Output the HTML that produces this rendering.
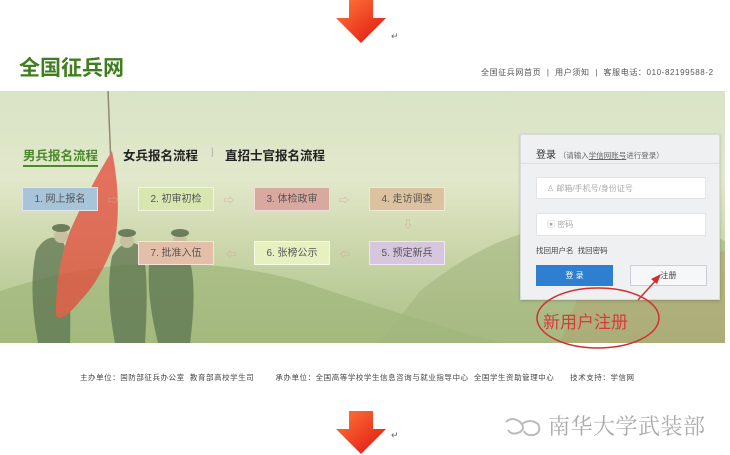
<!DOCTYPE html>
<html><head><meta charset="utf-8"><style>
*{margin:0;padding:0;box-sizing:border-box}
body{width:730px;height:455px;background:#fff;position:relative;overflow:hidden;font-family:"Liberation Sans","Noto Sans CJK SC",sans-serif}
.a{position:absolute}
.step{position:absolute;width:76px;height:24px;font-size:10px;color:#555;text-align:center;line-height:24px;border:1px solid rgba(255,255,255,.6)}
.ar{position:absolute;font-size:10px;color:#d9a0a0}
</style></head><body>
<svg class="a" style="left:336px;top:0" width="52" height="44"><defs><linearGradient id="g" x1="0" y1="0" x2="1" y2="1"><stop offset="0" stop-color="#ff7a3a"/><stop offset="1" stop-color="#e01010"/></linearGradient></defs><path d="M13 0H37V18H50L25 43L0 18H13Z" fill="url(#g)"/></svg>
<div class="a" style="left:391px;top:31px;font-size:9px;color:#666">↵</div>
<div class="a" style="left:19px;top:52px;font-size:21px;font-weight:bold;color:#3f7d1e">全国征兵网</div>
<div class="a" style="left:481px;top:67px;font-size:8px;letter-spacing:0.6px;color:#555;white-space:nowrap">全国征兵网首页 &nbsp;| &nbsp;用户须知 &nbsp;| &nbsp;客服电话：010-82199588-2</div>
<div class="a" style="left:0;top:91px;width:725px;height:252px;background:linear-gradient(180deg,#d9e3c5 0%,#e2e8cb 35%,#cdd8ad 60%,#a9bf86 100%)"></div>
<svg class="a" style="left:0;top:91px" width="725" height="252"><path d="M420 200 Q520 120 600 140 L660 120 L725 150 V252 H380Z" fill="#a3b57e" opacity=".6"/><path d="M0 200 Q150 150 300 190 Q420 230 500 252 H0Z" fill="#9fb77a" opacity=".7"/><path d="M560 252 L600 150 L660 170 L725 160 V252Z" fill="#b59a6a" opacity=".4"/>
<g opacity=".75">
<path d="M36 160 Q48 140 62 150 Q72 160 70 252 H38 Q28 200 36 160Z" fill="#5d7550"/>
<path d="M112 165 Q125 145 140 155 Q150 170 145 252 H115 Q105 200 112 165Z" fill="#5d7550"/>
<path d="M150 165 Q165 145 182 155 Q200 175 190 252 H158 Q145 200 150 165Z" fill="#5d7550"/>
<g fill="#c8b79e"><circle cx="61" cy="145" r="7"/><circle cx="127" cy="150" r="7"/><circle cx="180" cy="150" r="7"/></g>
<g fill="#4b5f3f"><ellipse cx="61" cy="137" rx="9" ry="4"/><ellipse cx="127" cy="142" rx="9" ry="4"/><ellipse cx="180" cy="142" rx="9" ry="4"/></g>
<path d="M108 0 L112 100" stroke="#7a6a5a" stroke-width="1.5"/>
<path d="M112 60 Q122 110 115 150 Q100 190 80 210 Q62 232 56 225 Q55 180 70 140 Q90 95 112 60Z" fill="#e24a3a"/>
</g></svg>
<div class="a" style="left:23px;top:145px;font-size:12.5px;font-weight:bold;color:#4a8a2a;border-bottom:2px solid #4a8a2a;padding-bottom:1px">男兵报名流程</div>
<div class="a" style="left:123px;top:145px;font-size:12.5px;font-weight:bold;color:#222">女兵报名流程</div>
<div class="a" style="left:211px;top:147px;font-size:10px;color:#aaa">|</div>
<div class="a" style="left:225px;top:145px;font-size:12.5px;font-weight:bold;color:#222">直招士官报名流程</div>
<div class="step" style="left:22px;top:187px;background:#a8c4d8">1. 网上报名</div>
<div class="step" style="left:138px;top:187px;background:#d8e6b0">2. 初审初检</div>
<div class="step" style="left:254px;top:187px;background:#d9a9a0">3. 体检政审</div>
<div class="step" style="left:369px;top:187px;background:#dcc3a0">4. 走访调查</div>
<div class="step" style="left:138px;top:241px;background:#e3bea8">7. 批准入伍</div>
<div class="step" style="left:254px;top:241px;background:#e6f0c0">6. 张榜公示</div>
<div class="step" style="left:369px;top:241px;background:#d6c6de">5. 预定新兵</div>
<div class="ar" style="left:108px;top:192px">⇨</div><div class="ar" style="left:224px;top:192px">⇨</div><div class="ar" style="left:339px;top:192px">⇨</div>
<div class="ar" style="left:226px;top:246px">⇦</div><div class="ar" style="left:340px;top:246px">⇦</div><div class="ar" style="left:403px;top:216px">⇩</div>
<div class="a" style="left:520px;top:134px;width:200px;height:166px;background:#eef0f2;border:1px solid #d8dcdf;box-shadow:0 1px 3px rgba(0,0,0,.2)"></div>
<div class="a" style="left:536px;top:146px;font-size:10px;color:#333">登录 <span style="font-size:7.5px;color:#666">（请输入<u>学信网账号</u>进行登录）</span></div>
<div class="a" style="left:521px;top:163px;width:198px;border-top:1px solid #dde"></div>
<div class="a" style="left:536px;top:177px;width:170px;height:22px;background:#fff;border:1px solid #e3e3e3;font-size:8px;color:#aaa;line-height:21px;padding-left:10px">♙ 邮箱/手机号/身份证号</div>
<div class="a" style="left:536px;top:213px;width:170px;height:23px;background:#fff;border:1px solid #e3e3e3;font-size:8px;color:#aaa;line-height:22px;padding-left:10px">▣ 密码</div>
<div class="a" style="left:536px;top:245px;font-size:7.5px;color:#444">找回用户名 &nbsp;找回密码</div>
<div class="a" style="left:536px;top:265px;width:77px;height:21px;background:#2e7fd0;color:#fff;font-size:8px;text-align:center;line-height:21px">登 录</div>
<div class="a" style="left:630px;top:265px;width:77px;height:21px;background:#f6f7f9;border:1px solid #ccd;color:#444;font-size:8px;text-align:center;line-height:20px">注册</div>
<svg class="a" style="left:530px;top:270px" width="150" height="90"><ellipse cx="68" cy="48" rx="61" ry="30" fill="none" stroke="#d03030" stroke-width="1.5"/><path d="M108 30 L128 8" stroke="#d03030" stroke-width="1.5"/><path d="M131 4 L121 9 L127 14Z" fill="#d03030"/></svg>
<div class="a" style="left:543px;top:308px;font-size:17px;color:#d83a3a">新用户注册</div>
<div class="a" style="left:80px;top:372px;font-size:7.5px;color:#444;white-space:nowrap;letter-spacing:0.55px">主办单位：国防部征兵办公室 &nbsp;教育部高校学生司 &nbsp; &nbsp; &nbsp; &nbsp;承办单位：全国高等学校学生信息咨询与就业指导中心 &nbsp;全国学生资助管理中心 &nbsp; &nbsp; &nbsp;技术支持：学信网</div>
<svg class="a" style="left:336px;top:411px" width="52" height="44"><path d="M13 0H37V18H50L25 43L0 18H13Z" fill="url(#g)"/></svg>
<div class="a" style="left:391px;top:430px;font-size:9px;color:#666">↵</div>
<svg class="a" style="left:502px;top:414px" width="42" height="26"><path d="M4 8 Q10 2 18 8 Q24 14 18 18 Q10 22 6 16" fill="none" stroke="#bbb" stroke-width="2"/><path d="M20 10 Q28 4 36 10 Q40 18 32 21 Q24 22 22 17" fill="none" stroke="#bbb" stroke-width="2"/></svg>
<div class="a" style="left:548px;top:410px;font-size:22px;letter-spacing:0.5px;color:#aaa;font-family:'Noto Serif CJK SC',serif">南华大学武装部</div>
</body></html>
